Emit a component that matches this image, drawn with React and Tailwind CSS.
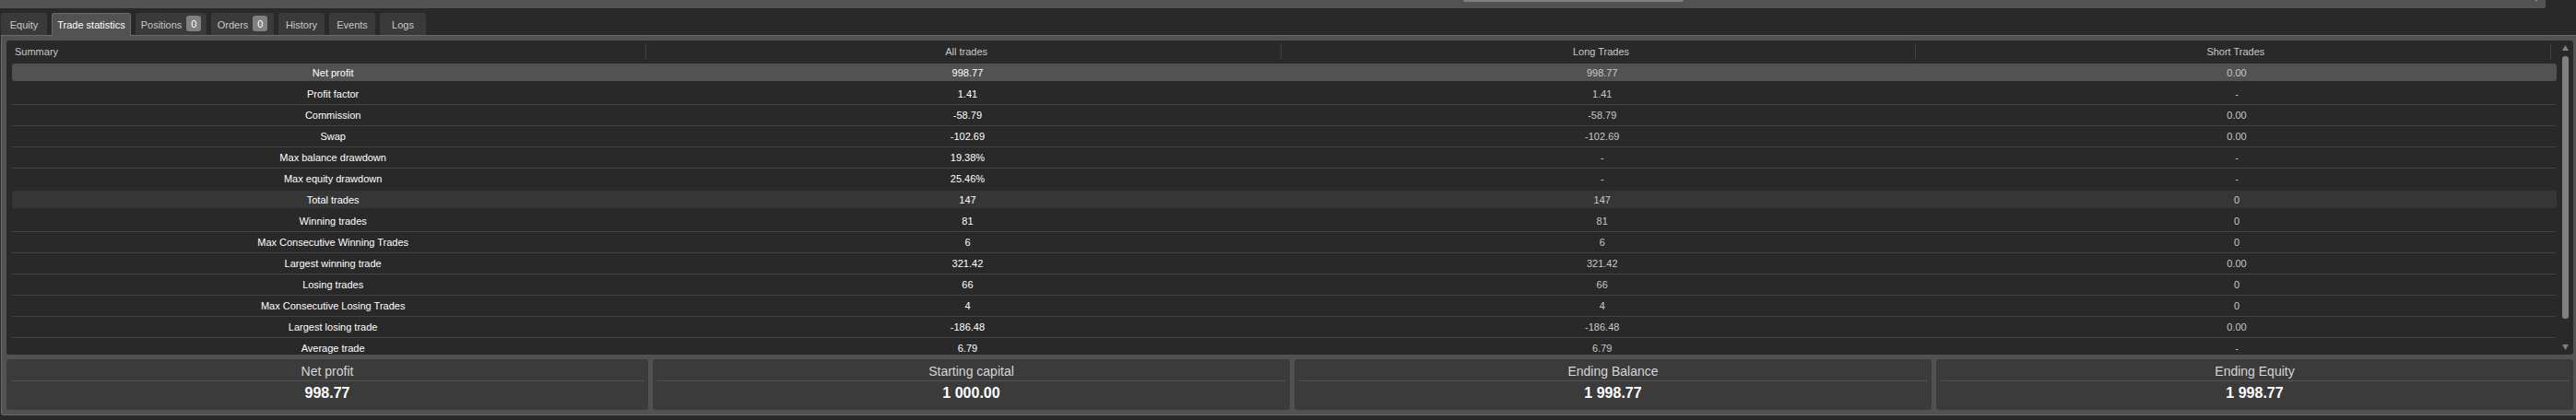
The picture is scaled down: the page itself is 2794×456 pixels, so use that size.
import React from 'react';

const tabs = [
  { label: 'Equity', width: 'w-[50px]' },
  { label: 'Trade statistics', width: 'w-[86px]', active: true },
  { label: 'Positions', width: 'w-[77px]', count: 0 },
  { label: 'Orders', width: 'w-[68px]', count: 0 },
  { label: 'History', width: 'w-[50px]' },
  { label: 'Events', width: 'w-[50px]' },
  { label: 'Logs', width: 'w-[50px]' },
];

const rows = [
  { cells: ['Net profit', '998.77', '998.77', '0.00'], bg: 'bg-[#525252]' },
  { cells: ['Profit factor', '1.41', '1.41', '-'], line: true },
  { cells: ['Commission', '-58.79', '-58.79', '0.00'], line: true },
  { cells: ['Swap', '-102.69', '-102.69', '0.00'], line: true },
  { cells: ['Max balance drawdown', '19.38%', '-', '-'], line: true },
  { cells: ['Max equity drawdown', '25.46%', '-', '-'] },
  { cells: ['Total trades', '147', '147', '0'], bg: 'bg-[#363636]' },
  { cells: ['Winning trades', '81', '81', '0'], line: true },
  { cells: ['Max Consecutive Winning Trades', '6', '6', '0'], line: true },
  { cells: ['Largest winning trade', '321.42', '321.42', '0.00'], line: true },
  { cells: ['Losing trades', '66', '66', '0'], line: true },
  { cells: ['Max Consecutive Losing Trades', '4', '4', '0'], line: true },
  { cells: ['Largest losing trade', '-186.48', '-186.48', '0.00'], line: true },
  { cells: ['Average trade', '6.79', '6.79', '-'] },
];

const cards = [
  { title: 'Net profit', value: '998.77' },
  { title: 'Starting capital', value: '1 000.00' },
  { title: 'Ending Balance', value: '1 998.77' },
  { title: 'Ending Equity', value: '1 998.77' },
];

const TopScroll = () => (
  <div className="flex h-[9px] w-[2761px] justify-between rounded-br-[2px] bg-[#525252]">
    <div className="ml-[1587px] h-[2px] w-[239px] rounded-b-[2px] bg-[#808080]" />
    <svg className="mr-2 h-[2px] w-[3px]" viewBox="0 0 3 2">
      <path d="M0 0H3L0 2Z" fill="#8a8a8a" />
    </svg>
  </div>
);

const Tabs = () => (
  <div className="mt-[5px] flex h-6 gap-[5px] pl-px">
    {tabs.map((tab) => (
      <div
        key={tab.label}
        className={`flex shrink-0 items-center justify-center gap-[5px] rounded-t-[3px] ${tab.width} ${
          tab.active
            ? 'relative z-10 h-[25px] border border-b-0 border-[#6a6a6a] bg-[#525252] pb-[2px] text-white'
            : 'h-6 bg-[#3a3a3a] text-[#c8c8c8]'
        }`}
      >
        <span className="pt-[2px]">{tab.label}</span>
        {tab.count !== undefined && (
          <span className="-mt-px flex h-[17px] w-4 items-center justify-center rounded-[3px] bg-[#808080] pt-px text-white">
            {tab.count}
          </span>
        )}
      </div>
    ))}
  </div>
);

const StatsTable = () => (
  <div className="flex h-[341px] overflow-hidden rounded-[3px] bg-[#292929]">
    <div className="w-[2766px] shrink-0">
      {/* Column titles */}
      <div className="flex h-[25px] items-start pl-[6px] text-[#c8c8c8]">
        {['Summary', 'All trades', 'Long Trades', 'Short Trades'].map((title, i) => (
          <div
            key={title}
            className={`mt-[3px] flex h-[18px] w-[688.4px] items-center border-r border-[#424242] ${
              i === 0 ? 'pl-[3px]' : 'justify-center pl-[6px]'
            }`}
          >
            {title}
          </div>
        ))}
      </div>
      {rows.map(({ cells, bg, line }) => (
        <div key={cells[0]} className="ml-[6px] h-[23px] w-[2760px]">
          <div className={`flex h-[19px] items-center rounded-[3px] pl-1 ${bg || ''}`}>
            {cells.map((cell, i) => (
              <div
                key={i}
                className={`w-[688.3px] shrink-0 pt-px text-center ${i < 2 ? 'text-white' : 'text-[#c8c8c8]'}`}
              >
                {cell}
              </div>
            ))}
          </div>
          {line && <div className="mt-[2px] mr-px h-px bg-[#424242]" />}
        </div>
      ))}
    </div>
    {/* Vertical scrollbar */}
    <div className="ml-[6px] flex w-[7px] flex-col items-center">
      <svg className="mt-[5px] h-[6px] w-[7px] shrink-0" viewBox="0 0 7 6">
        <path d="M3.5 0L7 6H0Z" fill="#808080" />
      </svg>
      <div className="mt-[6px] h-[285px] w-[7px] rounded-[3px] bg-[#808080]" />
      <svg className="mt-[28px] h-[6px] w-[7px] shrink-0" viewBox="0 0 7 6">
        <path d="M0 0H7L3.5 6Z" fill="#808080" />
      </svg>
    </div>
  </div>
);

const SummaryCards = () => (
  <div className="mt-[5px] grid grid-cols-[696px_1fr_1fr_1fr] gap-[5px]">
    {cards.map(({ title, value }) => (
      <div key={title} className="h-[55px] rounded-[3px] bg-[#3b3b3b] px-[5px] text-center">
        <div className="h-6 border-b border-[#525252] pt-[4px] text-sm/[18px] text-[#d6d6d6]">{title}</div>
        <div className="pt-[4px] text-base/[18px] font-bold text-white">{value}</div>
      </div>
    ))}
  </div>
);

const App = () => {
  return (
    <div className="h-[456px] w-[2794px] overflow-hidden bg-[#292929] font-['Liberation_Sans',sans-serif] text-[11px]/[13px]">
      <TopScroll />
      <Tabs />
      <div className="ml-px h-[413px] rounded-bl-[3px] border border-r-0 border-[#6a6a6a] bg-[#525252] pt-[5px] pr-[3px] pl-[5px]">
        <StatsTable />
        <SummaryCards />
      </div>
    </div>
  );
};

export default App;
